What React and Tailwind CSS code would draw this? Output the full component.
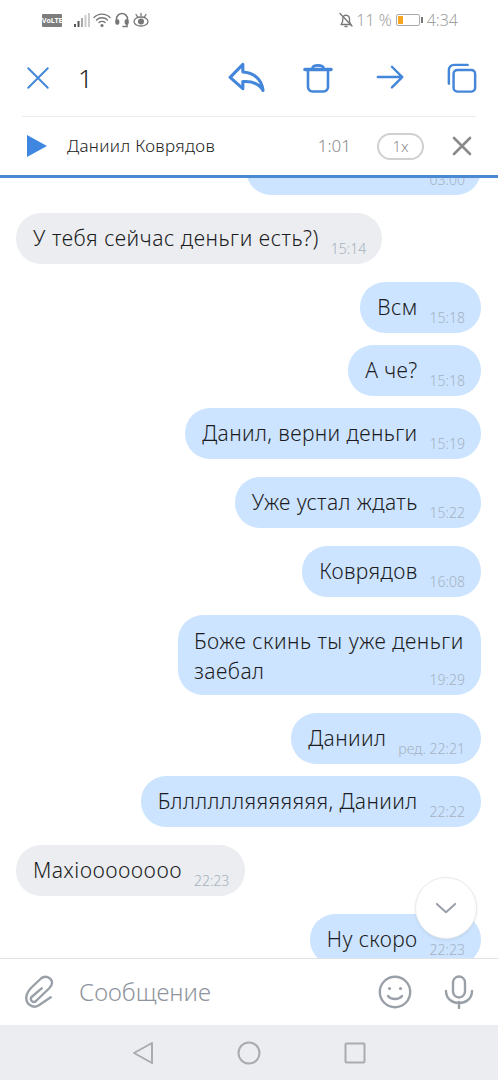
import React from 'react';

const messages = [
  { text: '', time: '03:00', mine: true, width: 'w-[235px]', mt: '-mt-[34px]', cut: true },
  { text: 'У тебя сейчас деньги есть?)', time: '15:14', mt: 'mt-[18px]', wide: true },
  { text: 'Всм', time: '15:18', mine: true, mt: 'mt-[18px]' },
  { text: 'А че?', time: '15:18', mine: true, mt: 'mt-3' },
  { text: 'Данил, верни деньги', time: '15:19', mine: true, mt: 'mt-3' },
  { text: 'Уже устал ждать', time: '15:22', mine: true, mt: 'mt-[18px]' },
  { text: 'Коврядов', time: '16:08', mine: true, mt: 'mt-[18px]' },
  { text: 'Боже скинь ты уже деньги заебал', time: '19:29', mine: true, mt: 'mt-[18px]', multi: true },
  { text: 'Даниил', time: 'ред. 22:21', mine: true, mt: 'mt-[18px]' },
  { text: 'Блллллляяяяяяя, Даниил', time: '22:22', mine: true, mt: 'mt-3' },
  { text: 'Maxioooooooo', time: '22:23', mt: 'mt-[18px]' },
  { text: 'Ну скоро', time: '22:23', mine: true, mt: 'mt-[18px]' },
];

const Bubble = ({ msg }) => {
  const side = msg.mine ? 'self-end mr-[17px] bg-[#cce4ff]' : 'self-start ml-4 bg-[#ebedf0]';
  if (msg.multi) {
    return (
      <div className={`${side} ${msg.mt} w-[303px] h-20 shrink-0 rounded-[25px] pl-4 pr-4 pt-[11px] relative`}>
        <p className="text-[21px] font-light tracking-[0.5px] leading-[30px] text-[#1c1c1e]">Боже скинь ты уже деньги<br />заебал</p>
        <span className="absolute right-4 bottom-[7px] text-[14px] font-light leading-4 text-[#a5b2bf]">{msg.time}</span>
      </div>
    );
  }
  const tracking = msg.wide ? 'tracking-[0.55px]' : 'tracking-[0.4px]';
  return (
    <div className={`${side} ${msg.mt} ${msg.width || ''} h-[51px] shrink-0 rounded-[25px] pl-[17px] pr-4 flex justify-end items-start`}>
      {!msg.cut && <span className={`mr-auto pr-3 pt-[10px] text-[21px] font-light ${tracking} leading-[30px] text-[#1c1c1e] whitespace-nowrap`}>{msg.text}</span>}
      <span className="pt-[28px] text-[14px] font-light leading-4 text-[#a5b2bf] whitespace-nowrap">{msg.time}</span>
    </div>
  );
};

const BlueIcon = ({ children, className }) => (
  <svg viewBox="0 0 32 32" className={className} fill="none" stroke="#4486d9" strokeWidth="2.6" strokeLinecap="round" strokeLinejoin="round">
    {children}
  </svg>
);

const StatusBar = () => (
  <div className="h-10 shrink-0 flex items-center pl-[42px] pr-[40px] text-[#9a9a9a]">
    <span className="w-5 h-[13px] bg-[#7d7d7d] rounded-[1px] text-white text-[7px] font-bold leading-[13px] text-center">VoLTE</span>
    <svg viewBox="0 0 16 14" className="w-4 h-[14px] ml-3">
      <rect x="0" y="11" width="2" height="3" fill="#555" />
      <rect x="3.5" y="8" width="2" height="6" fill="#555" />
      <rect x="7" y="5" width="2" height="9" fill="#aaa" />
      <rect x="10.5" y="2" width="2" height="12" fill="#ccc" />
      <rect x="14" y="0" width="2" height="14" fill="#ccc" />
    </svg>
    <svg viewBox="0 0 18 16" className="w-[18px] h-4 ml-[3px]" fill="none" stroke="#777" strokeWidth="1.4" strokeLinecap="round">
      <path d="M1 5.5 C5.5 1 12.5 1 17 5.5" />
      <path d="M3.5 8 C6.5 5 11.5 5 14.5 8" />
      <path d="M6 10.5 C7.5 9 10.5 9 12 10.5" />
      <circle cx="9" cy="13.5" r="0.9" fill="#777" />
    </svg>
    <svg viewBox="0 0 14 16" className="w-[14px] h-4 ml-[4px]" fill="none" stroke="#777" strokeWidth="1.5" strokeLinecap="round">
      <path d="M1.5 10 V7 a5.5 5.5 0 0 1 11 0 V10" />
      <rect x="1" y="8" width="2.6" height="4" rx="1" fill="#777" />
      <rect x="10.4" y="8" width="2.6" height="4" rx="1" fill="#777" />
      <path d="M12 12 V14.5 H8" />
    </svg>
    <svg viewBox="0 0 16 14" className="w-4 h-[14px] ml-[4px]" fill="none" stroke="#777" strokeWidth="1.3" strokeLinecap="round">
      <ellipse cx="8" cy="8.5" rx="7" ry="4.5" />
      <circle cx="8" cy="8.5" r="2.4" fill="#777" />
      <path d="M3 1.5 L4.5 3.8 M13 1.5 L11.5 3.8 M8 0.5 V3" />
    </svg>
    <svg viewBox="0 0 16 16" className="w-4 h-4 ml-auto" fill="none" stroke="#777" strokeWidth="1.3" strokeLinecap="round" strokeLinejoin="round">
      <path d="M3 12.5 H13 L11.5 10 V6.5 A3.5 3.5 0 0 0 5 5 L4.5 10 Z" />
      <path d="M7 14.5 H9 M2 1.5 L14 14" />
    </svg>
    <span className="ml-[2px] text-[16px] font-light leading-5 text-[#a0a0a0]">11 %</span>
    <div className="ml-[4px] w-[24px] h-[12px] rounded-[2px] border border-[#aaa] p-[1px] flex">
      <div className="w-[5px] bg-[#f5a623]"></div>
    </div>
    <div className="w-[2px] h-[6px] ml-[1px] bg-[#777]"></div>
    <span className="ml-[4px] text-[16px] font-light leading-5 text-[#a0a0a0]">4:34</span>
  </div>
);

const Header = () => (
  <div className="h-[76px] shrink-0 flex items-center pl-[26px] pr-[20px]">
    <BlueIcon className="w-6 h-6">
      <path d="M3 3 L29 29 M29 3 L3 29" />
    </BlueIcon>
    <span className="ml-[28px] text-[26px] font-light text-[#1c1c1e] w-[20px]">1</span>
    <BlueIcon className="w-[38px] h-[38px] ml-[130px]">
      <path d="M12.5 4.5 L1.8 15.5 L12.5 25 L12.5 19 C20 18.5 26 20 29.5 26.5 C28.5 17.5 22 11.5 12.5 11 Z" />
    </BlueIcon>
    <BlueIcon className="w-[32px] h-[32px] ml-[36px]">
      <path d="M3 7.5 H29" strokeWidth="3.6" />
      <path d="M10.5 6 C11 2.5 21 2.5 21.5 6" />
      <path d="M6 9 V25 a4.5 4.5 0 0 0 4.5 4.5 H21.5 a4.5 4.5 0 0 0 4.5 -4.5 V9" />
    </BlueIcon>
    <BlueIcon className="w-[30px] h-[30px] ml-[42px]">
      <path d="M2 15 H28 M17 4 L28 15 L17 26" />
    </BlueIcon>
    <BlueIcon className="w-[30px] h-[32px] ml-[41px]">
      <rect x="7" y="7.5" width="23" height="23" rx="4" />
      <path d="M2 22 V8 C2 4 4 2 8 2 H22" />
    </BlueIcon>
  </div>
);

const Player = () => (
  <div className="h-[59px] shrink-0 mx-[22px] border-t border-[#ececec] flex items-center">
    <svg viewBox="0 0 20 22" className="w-[20px] h-[22px] ml-[5px] shrink-0">
      <path d="M0 0 L20 11 L0 22 Z" fill="#3e86e0" />
    </svg>
    <span className="ml-[20px] text-[17px] font-light tracking-[0.35px] text-[#222]">Даниил Коврядов</span>
    <span className="ml-auto text-[17px] font-light text-[#8c8c8c]">1:01</span>
    <span className="ml-[26px] w-[47px] h-[27px] rounded-full border-2 border-[#d0d0d0] text-[15px] font-light leading-[23px] text-center text-[#8c8c8c]">1x</span>
    <svg viewBox="0 0 20 20" className="w-[20px] h-[20px] ml-[28px] mr-[4px]" stroke="#8a8a8a" strokeWidth="2.6" strokeLinecap="round">
      <path d="M2 2 L18 18 M18 2 L2 18" />
    </svg>
  </div>
);

const Composer = () => (
  <div className="h-[67px] shrink-0 border-t border-[#dfe1e4] flex items-center bg-white">
    <svg viewBox="0 0 32 34" className="w-8 h-[34px] ml-[23px]" fill="none" stroke="#9aa0a8" strokeWidth="2.4" strokeLinecap="round" strokeLinejoin="round">
      <path d="M27.7 22.3 L15.5 30.5 C10 34 2 29 3.5 21 C4 18 6 15 9 12 L18 3.5 C22 0 28 2 29 7 C29.5 9.5 28 11.5 26 13.5 L13 26 C10 28.5 6.5 25 8.5 22 L18.7 13.3" />
    </svg>
    <span className="ml-[24px] text-[24px] font-light text-[#8f959d]">Сообщение</span>
    <svg viewBox="0 0 34 34" className="w-[34px] h-[34px] ml-auto" fill="none" stroke="#9aa0a8" strokeWidth="2.4" strokeLinecap="round">
      <circle cx="17" cy="17" r="15.2" />
      <circle cx="11.5" cy="13.5" r="1.6" fill="#9aa0a8" stroke="none" />
      <circle cx="22.5" cy="13.5" r="1.6" fill="#9aa0a8" stroke="none" />
      <path d="M10 21 C13 25 21 25 24 21" />
    </svg>
    <svg viewBox="0 0 30 34" className="w-[30px] h-[34px] ml-[32px] mr-[24px]" fill="none" stroke="#9aa0a8" strokeWidth="2.4" strokeLinecap="round">
      <rect x="9" y="1.5" width="12" height="21" rx="6" />
      <path d="M2 16 C2 32 28 32 28 16 M15 27 V33" />
    </svg>
  </div>
);

const NavBar = () => (
  <div className="h-[55px] shrink-0 bg-[#ebedf0] flex items-center justify-center gap-[85px]">
    <svg viewBox="0 0 22 24" className="w-[22px] h-6" fill="none" stroke="#a9abaf" strokeWidth="2" strokeLinejoin="round">
      <path d="M20 2 L2 12 L20 22 Z" />
    </svg>
    <svg viewBox="0 0 24 24" className="w-6 h-6 -mx-[2px]" fill="none" stroke="#a9abaf" strokeWidth="2">
      <circle cx="12" cy="12" r="10.5" />
    </svg>
    <svg viewBox="0 0 22 22" className="w-[22px] h-[22px]" fill="none" stroke="#a9abaf" strokeWidth="2" strokeLinejoin="round">
      <rect x="1.5" y="1.5" width="19" height="19" rx="1" />
    </svg>
  </div>
);

export default function App() {
  return (
    <div className="w-[498px] h-[1080px] bg-white flex flex-col overflow-hidden font-['Noto_Sans',sans-serif]">
      <StatusBar />
      <Header />
      <Player />
      <div className="h-[3px] shrink-0 bg-[#4a8ad4]"></div>
      <div className="flex-1 min-h-0 relative overflow-hidden flex flex-col">
        {messages.map((msg, i) => <Bubble key={i} msg={msg} />)}
        <button className="absolute right-[21px] top-[699px] w-[62px] h-[62px] rounded-full bg-white border border-[#e8eaed] shadow-[0_1px_3px_rgba(0,0,0,0.08)] flex items-center justify-center">
          <svg viewBox="0 0 24 14" className="w-[22px] h-[13px]" fill="none" stroke="#9aa0a8" strokeWidth="2.2" strokeLinecap="round" strokeLinejoin="round">
            <path d="M2 2 L12 11 L22 2" />
          </svg>
        </button>
      </div>
      <Composer />
      <NavBar />
    </div>
  );
}
